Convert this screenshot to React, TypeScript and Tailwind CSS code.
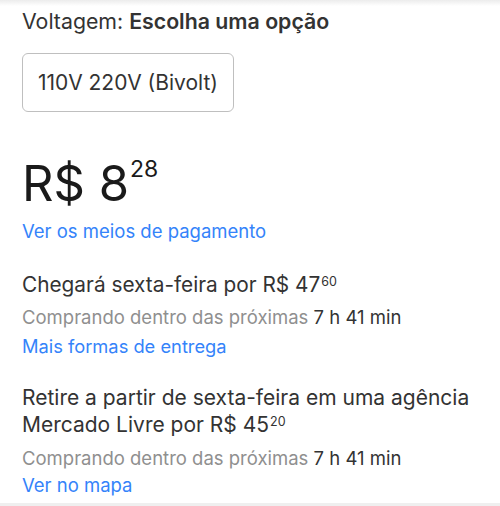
export default function App() {
  return (
    <div className="relative h-[506px] w-[500px] overflow-hidden bg-white font-['Inter',sans-serif] text-[#333]">
      {/* shadow from the header above */}
      <div className="absolute inset-x-0 top-0 h-[6px] bg-gradient-to-b from-[#ececec] to-white" />
      <div className="absolute inset-x-0 bottom-0 h-[3px] bg-[#efefef]" />

      <div className="relative px-[22px] pt-[8px]">
        <p className="text-[21.3px] leading-[26px]">
          Voltagem: <span className="font-semibold">Escolha uma opção</span>
        </p>

        <button className="mt-[19px] flex h-[59px] w-[212px] items-center justify-center rounded-[6px] border border-[#bfbfbf] text-[21px] text-[#333]">
          110V 220V (Bivolt)
        </button>

        <div className="mt-[47px] flex items-start text-[#1a1a1a]">
          <span className="text-[49px] leading-[49px]">R$ 8</span>
          <span className="-mt-[1px] ml-[1px] text-[23px] leading-[23px]">28</span>
        </div>

        <a className="mt-[11px] block text-[18.5px] leading-[24px] text-[#3483fa]">
          Ver os meios de pagamento
        </a>

        <p className="mt-[28px] text-[20.8px] leading-[27px]">
          Chegará sexta-feira por R$ 47
          <span className="ml-[1px] align-[0.5em] text-[12.5px] leading-[10px]">60</span>
        </p>
        <p className="mt-[7px] text-[18.5px] leading-[24px] text-[#8f8f8f]">
          Comprando dentro das próximas <span className="text-[#333]">7 h 41 min</span>
        </p>
        <a className="mt-[5px] block text-[18.3px] leading-[24px] text-[#3483fa]">
          Mais formas de entrega
        </a>

        <p className="mt-[26px] text-[21px] leading-[27px]">
          <span className="block">Retire a partir de sexta-feira em uma agência</span>
          <span className="block">
            Mercado Livre por R$ 45
            <span className="ml-[1px] align-[0.5em] text-[12.5px] leading-[10px]">20</span>
          </span>
        </p>
        <p className="mt-[8px] text-[18.5px] leading-[24px] text-[#8f8f8f]">
          Comprando dentro das próximas <span className="text-[#333]">7 h 41 min</span>
        </p>
        <a className="mt-[3px] block text-[18.5px] leading-[24px] text-[#3483fa]">
          Ver no mapa
        </a>
      </div>
    </div>
  );
}
